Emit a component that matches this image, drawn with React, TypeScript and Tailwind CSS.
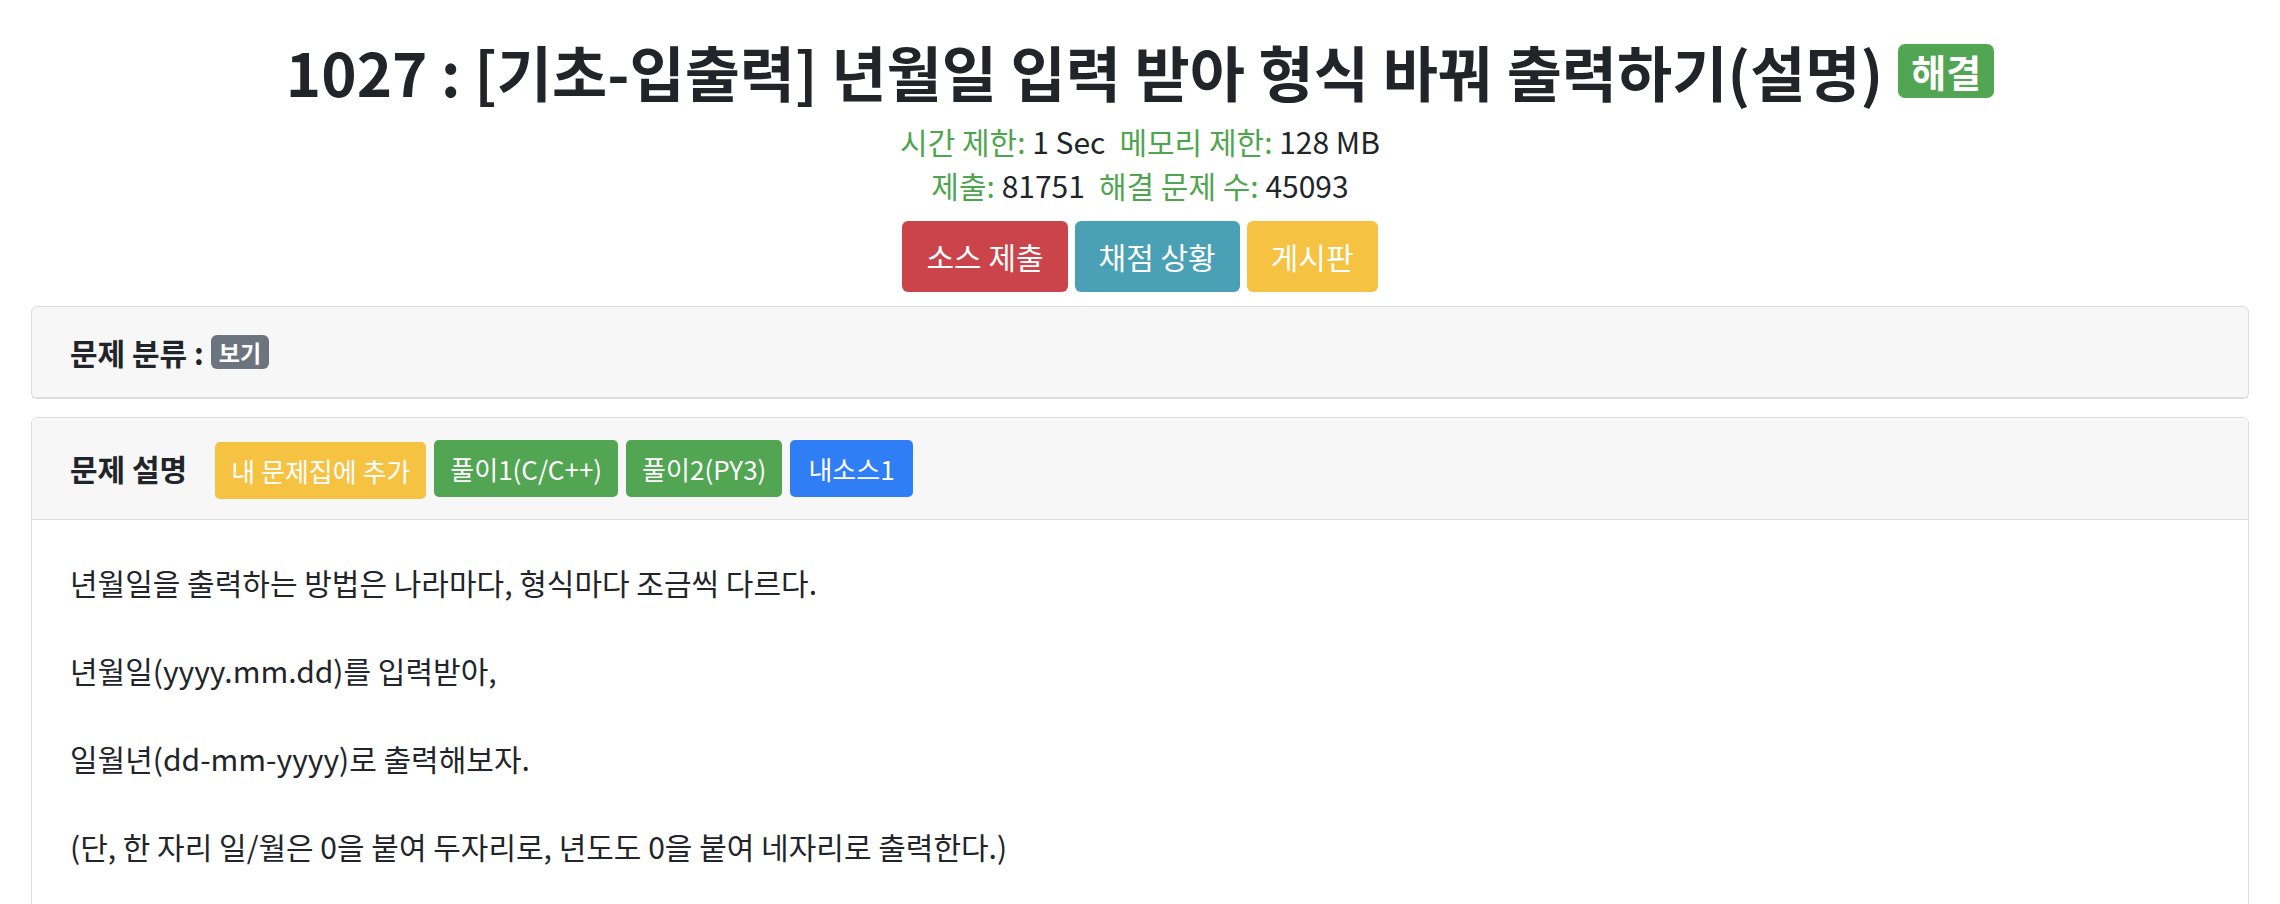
import React from 'react';

const FONT = "font-['Noto_Sans_CJK_KR','Noto_Sans',sans-serif]";

const stats = [
    [
        { label: '시간 제한:', value: '1 Sec' },
        { label: '메모리 제한:', value: '128 MB' },
    ],
    [
        { label: '제출:', value: '81751' },
        { label: '해결 문제 수:', value: '45093' },
    ],
];

const lines = [
    '년월일을 출력하는 방법은 나라마다, 형식마다 조금씩 다르다.',
    '년월일(yyyy.mm.dd)를 입력받아,',
    '일월년(dd-mm-yyyy)로 출력해보자.',
    '(단, 한 자리 일/월은 0을 붙여 두자리로, 년도도 0을 붙여 네자리로 출력한다.)',
];

function StatLine({ items }: { items: { label: string; value: string }[] }) {
    return (
        <div className="flex justify-center gap-[14px] text-[30px] leading-[44px]">
            {items.map((it) => (
                <span key={it.label}>
                    <span className="text-[#4fa54f]">{it.label}</span> <span className="text-[#212529]">{it.value}</span>
                </span>
            ))}
        </div>
    );
}

export default function App() {
    return (
        <div className={`${FONT} min-h-screen bg-white text-[#212529]`}>
            {/* header */}
            <div className="flex flex-col items-center pt-[38px]">
                <h1 className="flex items-center gap-[15px] text-[60px] font-bold leading-[65px]">
                    <span>1027 : [기초-입출력] 년월일 입력 받아 형식 바꿔 출력하기(설명)</span>
                    <span className="rounded-[7px] bg-[#52a552] px-[13px] text-[38px] leading-[54px] text-white">해결</span>
                </h1>
                <div className="mt-[16px]">
                    {stats.map((row, i) => (
                        <StatLine key={i} items={row} />
                    ))}
                </div>
                <div className="mt-[14px] flex gap-[7px]">
                    <button className="h-[71px] rounded-[6px] bg-[#cc444b] px-[24px] text-[30px] text-white">소스 제출</button>
                    <button className="h-[71px] rounded-[6px] bg-[#4aa1b5] px-[24px] text-[30px] text-white">채점 상황</button>
                    <button className="h-[71px] rounded-[6px] bg-[#f5c242] px-[24px] text-[30px] text-white">게시판</button>
                </div>
            </div>

            <div className="mx-[31px] mt-[14px] flex flex-col gap-[18px]">
                {/* category card */}
                <div className="rounded-[6px] border border-[#dedede] bg-[#f7f7f7]">
                    <div className="flex h-[91px] items-center border-b border-[#dedede] px-[38px]">
                        <span className="text-[30px] font-bold">문제 분류 :</span>
                        <span className="ml-[7px] rounded-[6px] bg-[#6c757d] px-[8px] text-[23px] font-bold leading-[34px] text-white">보기</span>
                    </div>
                </div>

                {/* description card */}
                <div className="rounded-[6px] border border-[#dedede] bg-white">
                    <div className="flex h-[102px] items-center rounded-t-[6px] border-b border-[#dedede] bg-[#f7f7f7] px-[38px]">
                        <span className="mr-[28px] text-[30px] font-bold">문제 설명</span>
                        <div className="flex items-center gap-[8px] text-[26px] text-white">
                            <button className="mt-[4px] h-[57px] rounded-[5px] bg-[#f5c242] px-[16px]">내 문제집에 추가</button>
                            <button className="h-[57px] rounded-[5px] bg-[#52a552] px-[16px]">풀이1(C/C++)</button>
                            <button className="h-[57px] rounded-[5px] bg-[#52a552] px-[16px]">풀이2(PY3)</button>
                            <button className="h-[57px] rounded-[5px] bg-[#2f7ef5] px-[18px]">내소스1</button>
                        </div>
                    </div>
                    <div className="px-[38px] pt-[40px] pb-[60px] text-[30px] leading-[44px]">
                        {lines.map((l, i) => (
                            <React.Fragment key={i}>
                                {i > 0 && <br />}
                                {l}
                                <br />
                            </React.Fragment>
                        ))}
                    </div>
                </div>
            </div>
        </div>
    );
}
